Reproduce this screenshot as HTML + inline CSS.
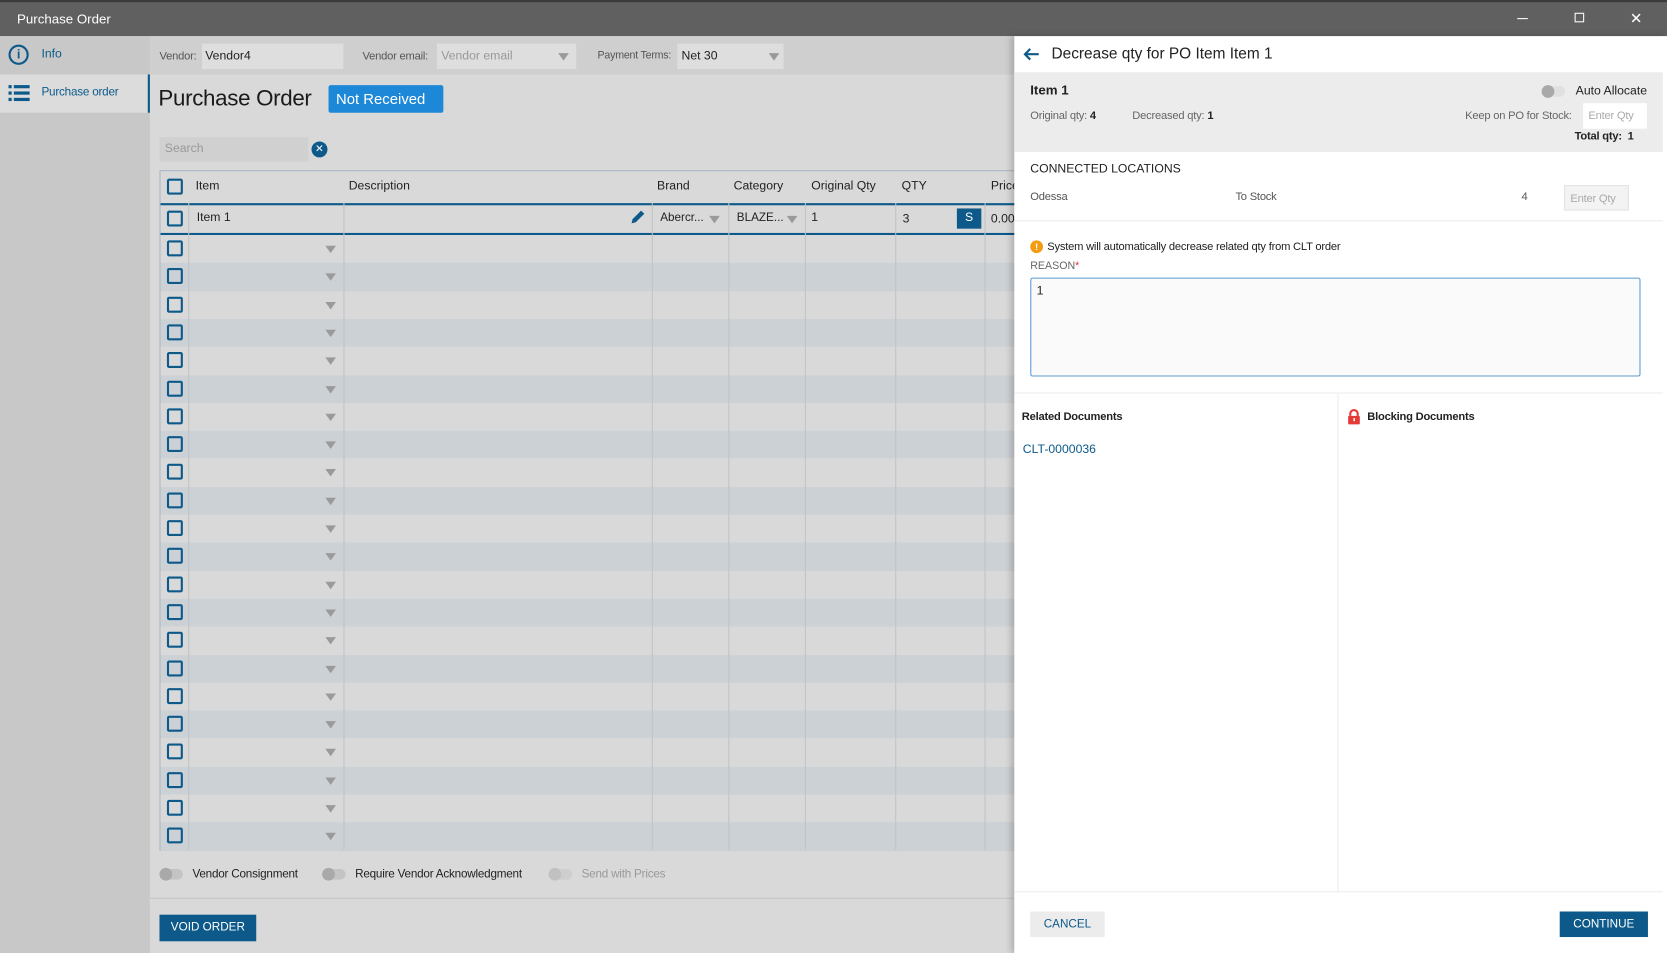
<!DOCTYPE html>
<html><head><meta charset="utf-8"><style>
*{box-sizing:border-box;margin:0;padding:0}
body{width:1667px;height:953px;overflow:hidden;font-family:"Liberation Sans",sans-serif;background:#d9d9d9}
#w{position:absolute;left:0;top:0;width:1568px;height:896px;transform:scale(1.0632,1.0636);transform-origin:0 0;font-size:11.5px;color:#222}
.a{position:absolute;white-space:nowrap}
.cb{position:absolute;width:15px;height:15px;border:2px solid #0d5a8a;border-radius:2px}
.tri{position:absolute;width:0;height:0;border-left:5px solid transparent;border-right:5px solid transparent;border-top:7px solid #9a9a9a}
.vl{position:absolute;top:191px;height:608px;width:1px;background:#bfc4c8}
.tg{position:absolute;width:22px;height:10px;border-radius:5px;background:#c4c4c4}
.tg:before{content:"";position:absolute;left:0;top:-1px;width:12px;height:12px;border-radius:6px;background:#a9a9a9}
.sm{font-size:10.5px;letter-spacing:-.2px}
</style></head><body><div id="w">
<div class="a" style="left:0;top:0;width:1568px;height:34px;background:#606060;border-top:2px solid #3a3a3a"></div>
<div class="a" style="left:16px;top:11px;color:#fff;font-size:12.5px">Purchase Order</div>
<div class="a" style="left:1427px;top:17px;width:10px;height:1px;background:#fff"></div>
<div class="a" style="left:1481px;top:12px;width:9px;height:9px;border:1px solid #fff"></div>
<div class="a" style="left:1533px;top:9px;color:#fff;font-size:14px">✕</div>
<div class="a" style="left:0;top:34px;width:141px;height:862px;background:#c8c8c8"></div>
<div class="a" style="left:0;top:70px;width:141px;height:36px;background:#dcdcdc;border-right:2px solid #0d5a8a"></div>
<div class="a" style="left:8px;top:42px;width:19px;height:19px;border:2px solid #0d5a8a;border-radius:50%;color:#0d5a8a;font-size:12px;font-weight:bold;text-align:center;line-height:15px">i</div>
<div class="a" style="left:39px;top:45px;color:#0d5a8a">Info</div>
<svg class="a" style="left:8px;top:79px" width="20" height="18"><g fill="#0d5a8a"><rect x="0" y="1" width="3" height="3"/><rect x="5" y="1" width="15" height="3"/><rect x="0" y="7" width="3" height="3"/><rect x="5" y="7" width="15" height="3"/><rect x="0" y="13" width="3" height="3"/><rect x="5" y="13" width="15" height="3"/></g></svg>
<div class="a sm" style="left:39px;top:81px;color:#0d5a8a;font-size:11px">Purchase order</div>
<div class="a" style="left:141px;top:34px;width:813px;height:36px;background:#cfcfcf"></div>
<div class="a sm" style="left:150px;top:47px;color:#555">Vendor:</div>
<div class="a" style="left:190px;top:41px;width:133px;height:24px;background:#dedede;padding:6px 3px">Vendor4</div>
<div class="a sm" style="left:341px;top:47px;color:#555">Vendor email:</div>
<div class="a" style="left:411px;top:41px;width:131px;height:24px;background:#dedede;padding:6px 4px;color:#999">Vendor email</div>
<div class="tri" style="left:525px;top:50px"></div>
<div class="a sm" style="left:562px;top:47px;color:#555;font-size:10px">Payment Terms:</div>
<div class="a" style="left:637px;top:41px;width:100px;height:24px;background:#dedede;padding:6px 4px">Net 30</div>
<div class="tri" style="left:723px;top:50px"></div>
<div class="a" style="left:149px;top:81px;font-size:21px;color:#1a1a1a;letter-spacing:-.3px">Purchase Order</div>
<div class="a" style="left:309px;top:80px;width:108px;height:26px;background:#1e88d8;color:#fff;font-size:14px;padding:5px 7px;border-radius:2px">Not Received</div>
<div class="a" style="left:150px;top:129px;width:140px;height:23px;background:#d0d0d0;color:#999;padding:5px 5px">Search</div>
<div class="a" style="left:293px;top:133px;width:15px;height:15px;border-radius:50%;background:#0d5a8a;color:#fff;font-size:10px;text-align:center;line-height:15px">✕</div>
<div class="a" style="left:150px;top:160px;width:810px;height:640px;border:1px solid #a9b6c4;border-right:none;background:#d9d9d9"></div>
<div class="a" style="left:151px;top:191px;width:810px;height:30px;border-top:2px solid #0d5a8a;border-bottom:2px solid #0d5a8a"></div>
<div id="rows"></div>
<div class="vl" style="left:177px"></div><div class="vl" style="left:323px"></div><div class="vl" style="left:613px"></div><div class="vl" style="left:685px"></div><div class="vl" style="left:757px"></div><div class="vl" style="left:842px"></div><div class="vl" style="left:926px"></div>
<div class="cb" style="left:157px;top:168px"></div>
<div class="a" style="left:184px;top:169px">Item</div><div class="a" style="left:328px;top:169px">Description</div><div class="a" style="left:618px;top:169px">Brand</div><div class="a" style="left:690px;top:169px">Category</div><div class="a" style="left:763px;top:169px">Original Qty</div><div class="a" style="left:848px;top:169px">QTY</div><div class="a" style="left:932px;top:169px">Price</div>
<div class="cb" style="left:157px;top:198px"></div>
<div class="a" style="left:185px;top:199px">Item 1</div>
<svg class="a" style="left:593px;top:197px" width="14" height="14"><path d="M1 13l1-4 8-8 3 3-8 8z" fill="#0d5a8a"/></svg>
<div class="a" style="left:621px;top:199px;font-size:11px">Abercr...</div><div class="tri" style="left:667px;top:203px"></div>
<div class="a" style="left:693px;top:199px;font-size:11px">BLAZE...</div><div class="tri" style="left:740px;top:203px"></div>
<div class="a" style="left:763px;top:199px">1</div><div class="a" style="left:849px;top:200px">3</div>
<div class="a" style="left:900px;top:196px;width:23px;height:19px;background:#0d5a8a;color:#fff;text-align:center;line-height:19px">S</div>
<div class="a" style="left:932px;top:200px">0.00</div>
<div class="tg" style="left:150px;top:817px"></div><div class="a sm" style="left:181px;top:816px;font-size:11px">Vendor Consignment</div>
<div class="tg" style="left:303px;top:817px"></div><div class="a sm" style="left:334px;top:816px;font-size:11px">Require Vendor Acknowledgment</div>
<div class="tg" style="left:516px;top:817px;opacity:.5"></div><div class="a sm" style="left:547px;top:816px;color:#999;font-size:11px">Send with Prices</div>
<div class="a" style="left:141px;top:844px;width:813px;height:1px;background:#c4c4c4"></div>
<div class="a" style="left:150px;top:860px;width:91px;height:25px;background:#0d5a8a;color:#fff;text-align:center;line-height:25px;font-size:11px">VOID ORDER</div>
<div class="a" style="left:954px;top:34px;width:614px;height:862px;background:#fff;box-shadow:-3px 0 6px rgba(0,0,0,.2)"></div>
<svg class="a" style="left:962px;top:45px" width="16" height="12"><path d="M15 6H2M7 1L2 6l5 5" stroke="#0d5a8a" stroke-width="2" fill="none"/></svg>
<div class="a" style="left:989px;top:43px;font-size:14.5px;color:#222">Decrease qty for PO Item Item 1</div>
<div class="a" style="left:954px;top:68px;width:610px;height:75px;background:#ececec"></div>
<div class="a" style="left:969px;top:78px;font-weight:bold;font-size:12.5px">Item 1</div>
<div class="a sm" style="left:969px;top:103px;color:#666">Original qty: <b style="color:#222">4</b></div>
<div class="a sm" style="left:1065px;top:103px;color:#666">Decreased qty: <b style="color:#222">1</b></div>
<div class="tg" style="left:1450px;top:81px;background:#e0e0e0"></div>
<div class="a" style="left:1482px;top:80px">Auto Allocate</div>
<div class="a sm" style="left:1378px;top:103px;color:#666">Keep on PO for Stock:</div>
<div class="a sm" style="left:1489px;top:97px;width:60px;height:24px;background:#fff;color:#aaa;padding:6px 5px">Enter Qty</div>
<div class="a sm" style="left:1481px;top:122px;font-weight:bold">Total qty: &nbsp;1</div>
<div class="a" style="left:969px;top:153px">CONNECTED LOCATIONS</div>
<div class="a sm" style="left:969px;top:179px;color:#555">Odessa</div>
<div class="a sm" style="left:1162px;top:179px;color:#555">To Stock</div>
<div class="a sm" style="left:1431px;top:179px;color:#555">4</div>
<div class="a sm" style="left:1471px;top:174px;width:61px;height:24px;background:#f3f3f3;border:1px solid #e3e3e3;color:#aaa;padding:6px 5px">Enter Qty</div>
<div class="a" style="left:954px;top:207px;width:610px;height:1px;background:#ececec"></div>
<div class="a" style="left:969px;top:226px;width:12px;height:12px;border-radius:50%;background:#f39c12;color:#fff;font-size:9px;font-weight:bold;text-align:center;line-height:12px">!</div>
<div class="a sm" style="left:985px;top:226px">System will automatically decrease related qty from CLT order</div>
<div class="a" style="left:969px;top:245px;color:#666;font-size:10px">REASON<span style="color:#e53935">*</span></div>
<div class="a" style="left:969px;top:261px;width:574px;height:93px;border:1px solid #5a9ad0;border-radius:2px;background:#fafafa;padding:6px 5px">1</div>
<div class="a" style="left:954px;top:369px;width:610px;height:1px;background:#ececec"></div>
<div class="a" style="left:1258px;top:370px;width:1px;height:468px;background:#ececec"></div>
<div class="a sm" style="left:961px;top:386px;font-weight:bold">Related Documents</div>
<div class="a" style="left:962px;top:417px;color:#0d5a8a">CLT-0000036</div>
<svg class="a" style="left:1267px;top:384px" width="13" height="16"><path d="M3 7V5a3.5 3.5 0 0 1 7 0v2" stroke="#e53935" stroke-width="2" fill="none"/><rect x="1" y="7" width="11" height="8" rx="1" fill="#e53935"/><rect x="6" y="9" width="1.4" height="3" fill="#fff"/></svg>
<div class="a sm" style="left:1286px;top:386px;font-weight:bold">Blocking Documents</div>
<div class="a" style="left:954px;top:838px;width:610px;height:1px;background:#ececec"></div>
<div class="a" style="left:969px;top:857px;width:70px;height:24px;background:#ececec;color:#0d5a8a;text-align:center;line-height:24px;font-size:11px">CANCEL</div>
<div class="a" style="left:1467px;top:857px;width:83px;height:24px;background:#0d5a8a;color:#fff;text-align:center;line-height:24px;font-size:11px">CONTINUE</div>
</div>
<script>
var h='';for(var i=0;i<22;i++){var t=221+i*26.3;h+='<div class="a" style="left:151px;top:'+t+'px;width:803px;height:26.3px;background:'+(i%2?'#ccd1d6':'#d9d9d9')+'"></div><div class="cb" style="left:157px;top:'+(t+5)+'px"></div><div class="tri" style="left:306px;top:'+(t+10)+'px"></div>';}
document.getElementById('rows').outerHTML=h;
</script>
</body></html>
